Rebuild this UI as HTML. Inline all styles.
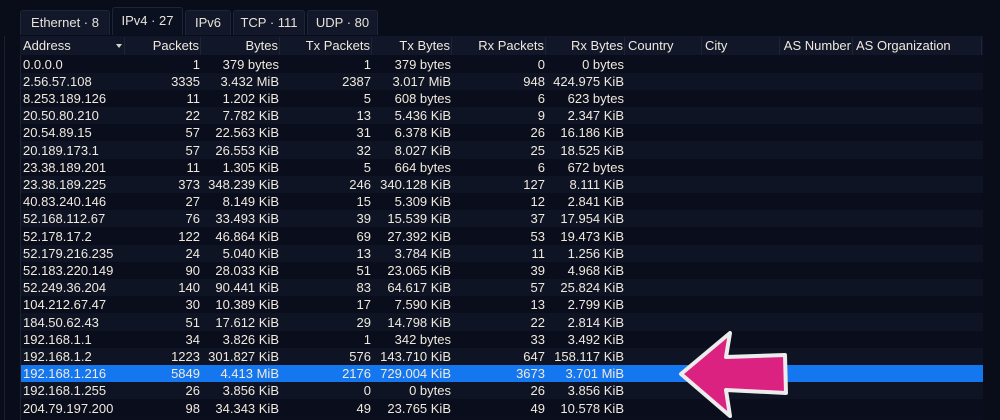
<!DOCTYPE html>
<html><head><meta charset="utf-8"><style>
*{margin:0;padding:0;box-sizing:border-box}
body{width:1000px;height:420px;background:#090d1a;overflow:hidden;position:relative;font-family:"Liberation Sans",sans-serif;font-size:13px;color:#efe9de}
.tab{position:absolute;top:10px;height:25px;background:#121829;border:1px solid #1e2538;border-bottom:none;border-radius:3px 3px 0 0;padding-top:4px;text-align:center;color:#e8e3da;white-space:nowrap}
.tab.a{background:#0b1020;top:7px;height:28px;padding-top:5px}
.tbl{position:absolute;left:20px;top:36px;width:963px;height:384px;background:#0b0f1d;border-left:1px solid #1c2336}
.hd{position:absolute;left:20px;top:36px;width:963px;height:19px;background:#111728}
.c{position:absolute;height:17px;line-height:17px;white-space:nowrap}
.r{text-align:right}
.hc{position:absolute;top:37px;height:18px;line-height:18px;border-right:1px solid #1d2437;white-space:nowrap;overflow:visible}
.row{position:absolute;left:21px;width:962px;height:17.2px}
.side{position:absolute;left:4px;top:36px;width:1px;height:384px;background:#1a2030}
</style></head><body>
<div class="side"></div>
<div class="tab" style="left:20px;width:90px">Ethernet · 8</div>
<div class="tab a" style="left:112px;width:71px">IPv4 · 27</div>
<div class="tab" style="left:185px;width:46px">IPv6</div>
<div class="tab" style="left:233px;width:72px">TCP · 111</div>
<div class="tab" style="left:307px;width:71px">UDP · 80</div>
<div class="tbl"></div>
<div class="hd"></div>
<div id="t"></div>
<svg style="position:absolute;left:0;top:0" width="1000" height="420">
<path d="M681,374 L730,333 L726,357 L785,355 L786,393 L726,390 L730,416 Z" fill="#dc2280" stroke="#ececec" stroke-width="4" stroke-linejoin="round"/>
</svg>
<script>
var cols=[[20,125,'Address','l'],[125,201,'Packets'],[201,280,'Bytes'],[280,372,'Tx Packets'],[372,452,'Tx Bytes'],[452,546,'Rx Packets'],[546,625,'Rx Bytes'],[625,702,'Country','l'],[702,780,'City','l'],[780,853,'AS Number'],[853,982,'AS Organization','l']];
var d=[["0.0.0.0",1,"379 bytes",1,"379 bytes",0,"0 bytes"],
["2.56.57.108",3335,"3.432 MiB",2387,"3.017 MiB",948,"424.975 KiB"],
["8.253.189.126",11,"1.202 KiB",5,"608 bytes",6,"623 bytes"],
["20.50.80.210",22,"7.782 KiB",13,"5.436 KiB",9,"2.347 KiB"],
["20.54.89.15",57,"22.563 KiB",31,"6.378 KiB",26,"16.186 KiB"],
["20.189.173.1",57,"26.553 KiB",32,"8.027 KiB",25,"18.525 KiB"],
["23.38.189.201",11,"1.305 KiB",5,"664 bytes",6,"672 bytes"],
["23.38.189.225",373,"348.239 KiB",246,"340.128 KiB",127,"8.111 KiB"],
["40.83.240.146",27,"8.149 KiB",15,"5.309 KiB",12,"2.841 KiB"],
["52.168.112.67",76,"33.493 KiB",39,"15.539 KiB",37,"17.954 KiB"],
["52.178.17.2",122,"46.864 KiB",69,"27.392 KiB",53,"19.473 KiB"],
["52.179.216.235",24,"5.040 KiB",13,"3.784 KiB",11,"1.256 KiB"],
["52.183.220.149",90,"28.033 KiB",51,"23.065 KiB",39,"4.968 KiB"],
["52.249.36.204",140,"90.441 KiB",83,"64.617 KiB",57,"25.824 KiB"],
["104.212.67.47",30,"10.389 KiB",17,"7.590 KiB",13,"2.799 KiB"],
["184.50.62.43",51,"17.612 KiB",29,"14.798 KiB",22,"2.814 KiB"],
["192.168.1.1",34,"3.826 KiB",1,"342 bytes",33,"3.492 KiB"],
["192.168.1.2",1223,"301.827 KiB",576,"143.710 KiB",647,"158.117 KiB"],
["192.168.1.216",5849,"4.413 MiB",2176,"729.004 KiB",3673,"3.701 MiB"],
["192.168.1.255",26,"3.856 KiB",0,"0 bytes",26,"3.856 KiB"],
["204.79.197.200",98,"34.343 KiB",49,"23.765 KiB",49,"10.578 KiB"]];
var h='';
cols.forEach(function(c,i){h+='<div class="hc'+(c[3]?'':' r')+'" style="left:'+c[0]+'px;width:'+(c[1]-c[0])+'px;padding:0 1px 0 3px">'+c[2]+'</div>';});
h+='<div style="position:absolute;left:116px;top:44px;width:0;height:0;border-left:3px solid transparent;border-right:3px solid transparent;border-top:4px solid #d8d4cc"></div>';
d.forEach(function(r,i){var y=55.4+i*17.2;
var bg=i==18?'#1477f0':(i%2?'#0f1424':'#0a0d1b');
h+='<div class="row" style="top:'+y+'px;background:'+bg+'"></div>';
for(var k=0;k<7;k++){var c=cols[k];h+='<div class="c'+(k?' r':'')+'" style="left:'+c[0]+'px;width:'+(c[1]-c[0])+'px;top:'+(y+0.2)+'px;padding:0 1px 0 3px">'+r[k]+'</div>';}
});
document.getElementById('t').innerHTML=h;
</script>
</body></html>
